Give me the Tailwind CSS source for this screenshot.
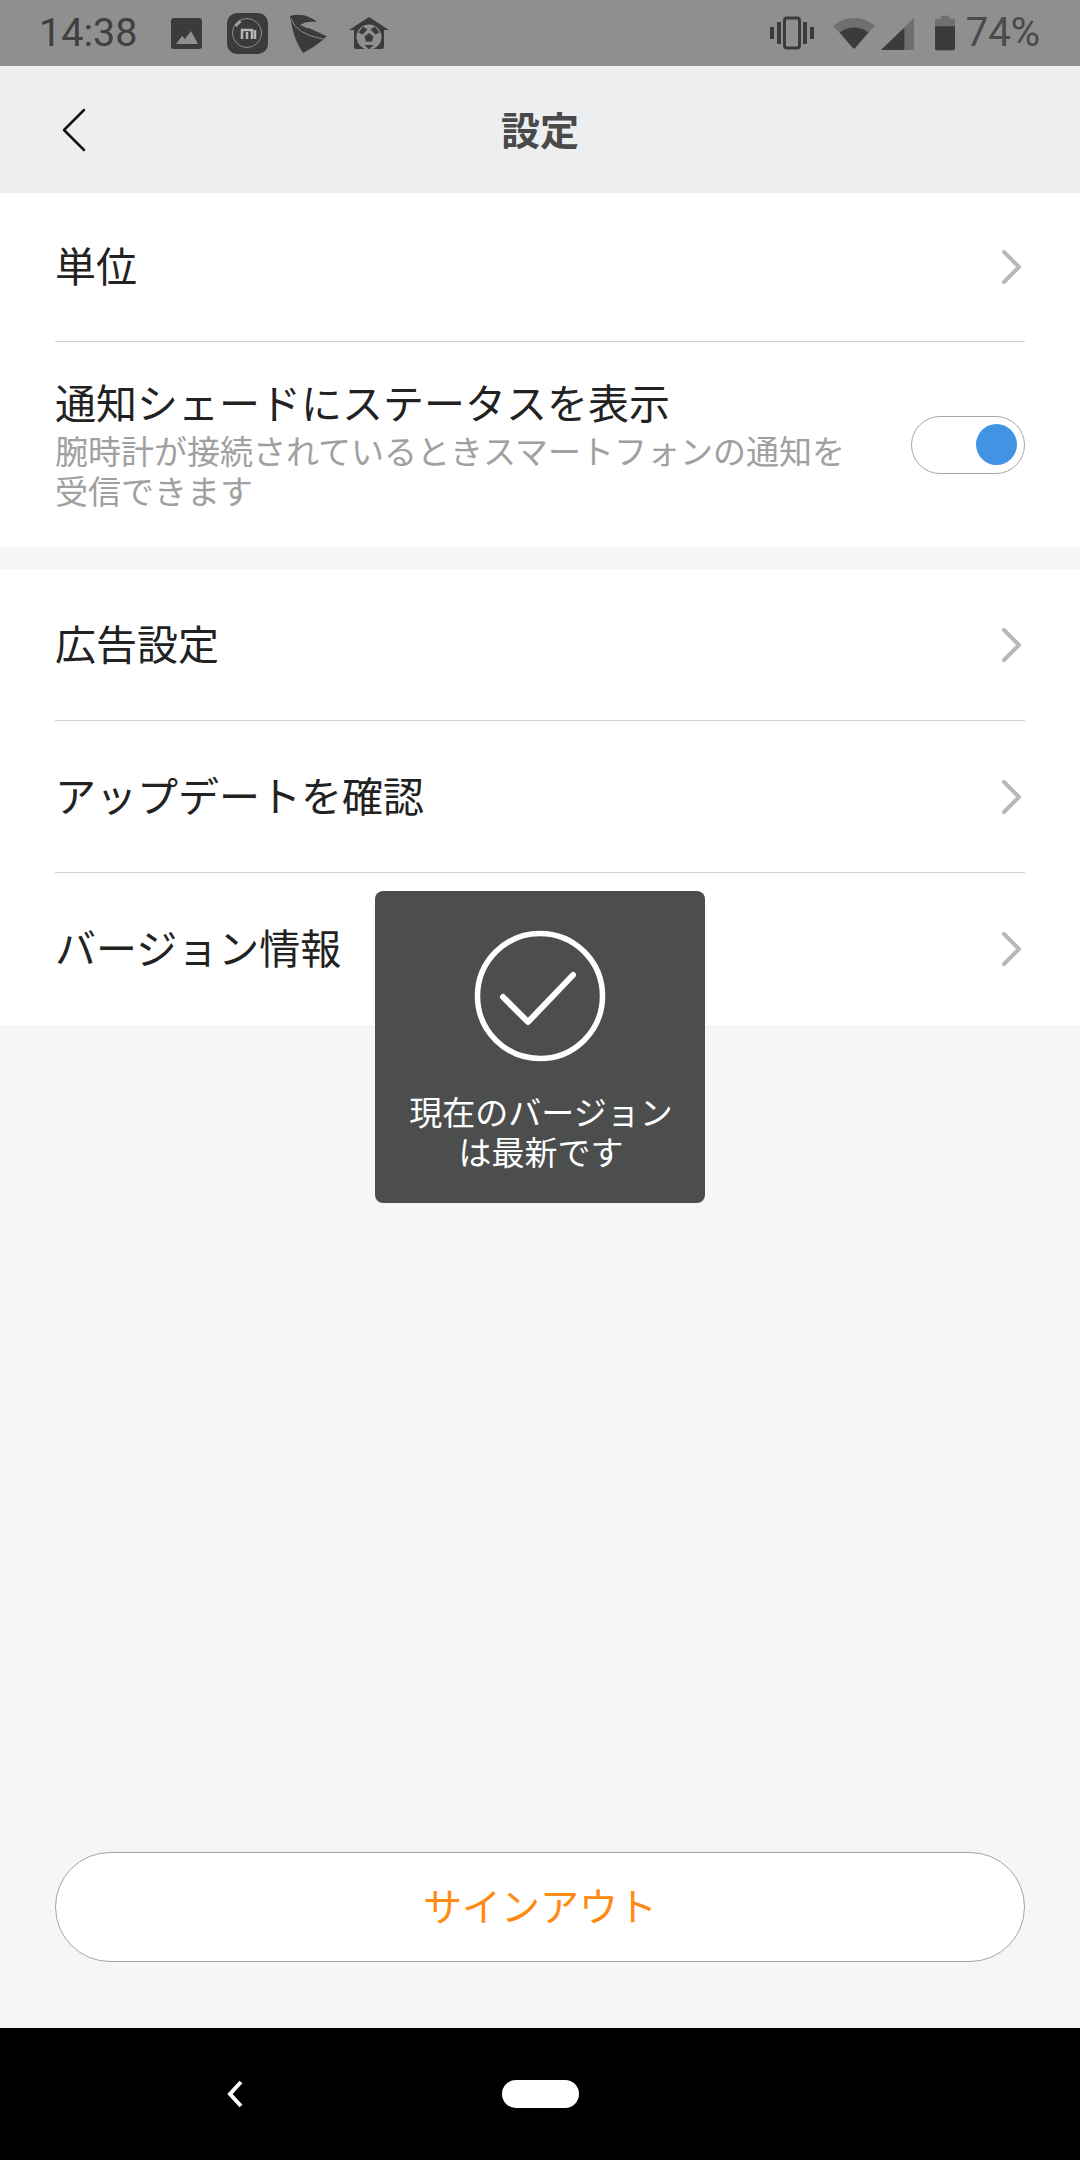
<!DOCTYPE html>
<html lang="ja">

<head>
  <meta charset="UTF-8">
  <title>設定</title>
  <script src="https://cdn.jsdelivr.net/npm/@tailwindcss/browser@4"></script>
</head>

<body class="bg-[#f5f6f8] font-['Noto_Sans_CJK_JP','Noto_Sans',sans-serif]">
  <div class="relative w-[1080px] h-[2160px] flex flex-col overflow-hidden">

    <!-- Status bar -->
    <div class="h-[66px] bg-[#8f8f8f] flex items-center text-[#3b3b3b] shrink-0">
      <span class="ml-[39px] w-[95px] font-['Roboto',sans-serif] text-[39.500px] leading-none text-[#404040]">14:38</span>
      <svg class="ml-[37px] w-[31px] h-[31px]" viewBox="0 0 31 31">
        <rect width="31" height="31" rx="3" fill="#3b3b3b" />
        <path d="M5 26l6-8 3 3 6-8 7 13z" fill="#8f8f8f" />
      </svg>
      <svg class="ml-[25px] w-[41px] h-[41px]" viewBox="0 0 41 41">
        <rect width="41" height="41" rx="10" fill="#3b3b3b" />
        <circle cx="20" cy="20" r="14.500" fill="none" stroke="#8f8f8f" stroke-width="1" />
        <path d="M8.500 13l5-5" stroke="#a0a0a0" stroke-width="3" />
        <path d="M15 26v-9h10v9M20 26v-7M28 17v9" fill="none" stroke="#b5b5b5" stroke-width="2.500" />
      </svg>
      <svg class="ml-[22px] w-[37px] h-[39px]" viewBox="0 0 37 39">
        <path d="M0 2C10-1 20 2 27 8C20 7 14 8 10 11C14 12 15 14 20 14.500L36.700 22.300L33 25.700C27 31 20 35 13 39C5 27 2 15 0 2z" fill="#3b3b3b" />
        <path d="M1 5Q6 20 33 25" stroke="#8f8f8f" stroke-width="1" fill="none" />
      </svg>
      <svg class="ml-[22px] w-[40px] h-[32px]" viewBox="0 0 40 32">
        <path d="M0 13L20 0l20 13z" fill="#3b3b3b" />
        <rect x="5" y="10" width="30" height="22" rx="2" fill="#3b3b3b" />
        <circle cx="20" cy="20" r="12.500" fill="#8f8f8f" />
        <path d="M20 16l4.500 3.500-1.500 5h-6l-1.500-5zM14 9.500l4.500 3-5 5-4-2zM26 9.500l-4.500 3 5 5 4-2zM15.500 28h9l-4.500 4.500z" fill="#3b3b3b" />
      </svg>
      <svg class="ml-auto w-[44px] h-[34px]" viewBox="0 0 44 34">
        <path d="M0 11h4v12H0zM40 11h4v12h-4zM7 6h4v22H7zM33 6h4v22h-4z" fill="#3b3b3b" />
        <rect x="14.500" y="2" width="15" height="30" rx="2.500" fill="none" stroke="#3b3b3b" stroke-width="3" />
      </svg>
      <svg class="ml-[19px] w-[42px] h-[33px]" viewBox="0 0 44 34">
        <path d="M0 9C12-2 32-2 44 9L22 33z" fill="#6f6f6f" />
        <path d="M7 16c9-7 21-7 30 0L23.500 32a2 2 0 0 1-3 0z" fill="#3b3b3b" />
      </svg>
      <svg class="ml-[6px] w-[33px] h-[33px]" viewBox="0 0 34 34">
        <path d="M34 1v33H0z" fill="#6f6f6f" />
        <path d="M24 11v23H0z" fill="#3b3b3b" />
      </svg>
      <svg class="ml-[21px] w-[20px] h-[36px]" viewBox="0 0 21 36">
        <path d="M6 0h9v3h4a2 2 0 0 1 2 2v29a2 2 0 0 1-2 2H2a2 2 0 0 1-2-2V5a2 2 0 0 1 2-2h4z" fill="#6f6f6f" />
        <path d="M0 11h21v23a2 2 0 0 1-2 2H2a2 2 0 0 1-2-2z" fill="#3b3b3b" />
      </svg>
      <span class="ml-[11px] mr-[40px] font-['Roboto',sans-serif] text-[40px] leading-none text-[#4a4a4a]">74%</span>
    </div>

    <!-- Header -->
    <div class="h-[127px] bg-[#edeef0] relative flex items-center justify-center shrink-0">
      <svg class="absolute left-[61px] top-[42px] w-[26px] h-[44px]" viewBox="0 0 26 44">
        <path d="M23 2L3 22l20 20" fill="none" stroke="#111111" stroke-width="2.500" stroke-linecap="round" stroke-linejoin="round" />
      </svg>
      <h1 class="mb-[3px] text-[39px] font-bold leading-none text-[#4a4a4a]">設定</h1>
    </div>

    <!-- First group -->
    <div class="bg-white shrink-0">
      <div class="h-[148px] mx-[55px] flex items-center justify-between border-b border-[#cfcfd1] box-content">
        <span class="mb-[6px] text-[41px] leading-none text-[#222222]">単位</span>
        <svg class="w-[24px] h-[40px] mr-[1px] mb-[1px]" viewBox="0 0 24 40">
          <path d="M4 5l15 15L4 35" fill="none" stroke="#b8b8b8" stroke-width="4" stroke-linecap="round" stroke-linejoin="round" />
        </svg>
      </div>
      <div class="h-[205px] mx-[55px] flex items-center justify-between">
        <div class="w-[800px] -mt-[2px]">
          <div class="text-[41px] leading-[48px] text-[#222222]">通知シェードにステータスを表示</div>
          <div class="mt-[5px] text-[33px] leading-[40px] text-[#a0a0a0]">腕時計が接続されているときスマートフォンの通知を<br>受信できます</div>
        </div>
        <div class="w-[114px] h-[58px] rounded-full border border-[#a8a8a8] flex items-center justify-end pr-[7px]">
          <div class="w-[41px] h-[41px] rounded-full bg-[#4293e4]"></div>
        </div>
      </div>
    </div>

    <!-- Second group -->
    <div class="mt-[22px] bg-white shrink-0">
      <div class="h-[151px] mx-[55px] flex items-center justify-between border-b border-[#cfcfd1] box-content">
        <span class="mb-[5px] text-[41px] leading-none text-[#222222]">広告設定</span>
        <svg class="w-[24px] h-[40px] mr-[1px]" viewBox="0 0 24 40">
          <path d="M4 5l15 15L4 35" fill="none" stroke="#b8b8b8" stroke-width="4" stroke-linecap="round" stroke-linejoin="round" />
        </svg>
      </div>
      <div class="h-[151px] mx-[55px] flex items-center justify-between border-b border-[#cfcfd1] box-content">
        <span class="mb-[5px] text-[41px] leading-none text-[#222222]">アップデートを確認</span>
        <svg class="w-[24px] h-[40px] mr-[1px]" viewBox="0 0 24 40">
          <path d="M4 5l15 15L4 35" fill="none" stroke="#b8b8b8" stroke-width="4" stroke-linecap="round" stroke-linejoin="round" />
        </svg>
      </div>
      <div class="h-[152px] mx-[55px] flex items-center justify-between">
        <span class="mb-[5px] text-[41px] leading-none text-[#222222]">バージョン情報</span>
        <svg class="w-[24px] h-[40px] mr-[1px]" viewBox="0 0 24 40">
          <path d="M4 5l15 15L4 35" fill="none" stroke="#b8b8b8" stroke-width="4" stroke-linecap="round" stroke-linejoin="round" />
        </svg>
      </div>
    </div>

    <!-- Sign out -->
    <div class="flex-1 flex flex-col justify-end px-[55px] pb-[66px]">
      <button class="h-[110px] w-full pb-[5px] rounded-full bg-white border border-[#a4a4a4] text-[39px] leading-none text-[#ff8a14]">サインアウト</button>
    </div>

    <!-- Nav bar -->
    <div class="h-[132px] bg-black relative flex items-center justify-center shrink-0">
      <svg class="absolute left-[225px] top-[52px] w-[20px] h-[28px]" viewBox="0 0 20 28">
        <path d="M16 2L5 14l11 12" fill="none" stroke="#ffffff" stroke-width="4" />
      </svg>
      <div class="w-[77px] h-[28px] rounded-full bg-white"></div>
    </div>

    <!-- Toast -->
    <div class="absolute left-[375px] top-[891px] w-[330px] h-[312px] rounded-[8px] bg-[#4c4d4d] flex flex-col items-center text-white">
      <svg class="mt-[39px] w-[132px] h-[132px]" viewBox="0 0 132 132">
        <circle cx="66" cy="66" r="62.500" fill="none" stroke="#ffffff" stroke-width="5.500" />
        <path d="M29 67l25 25 45-47" fill="none" stroke="#ffffff" stroke-width="6" stroke-linecap="round" stroke-linejoin="round" />
      </svg>
      <div class="mt-[29px] ml-[2px] text-[33px] leading-[40px] text-center">現在のバージョン<br>は最新です</div>
    </div>
  </div>
</body>

</html>
